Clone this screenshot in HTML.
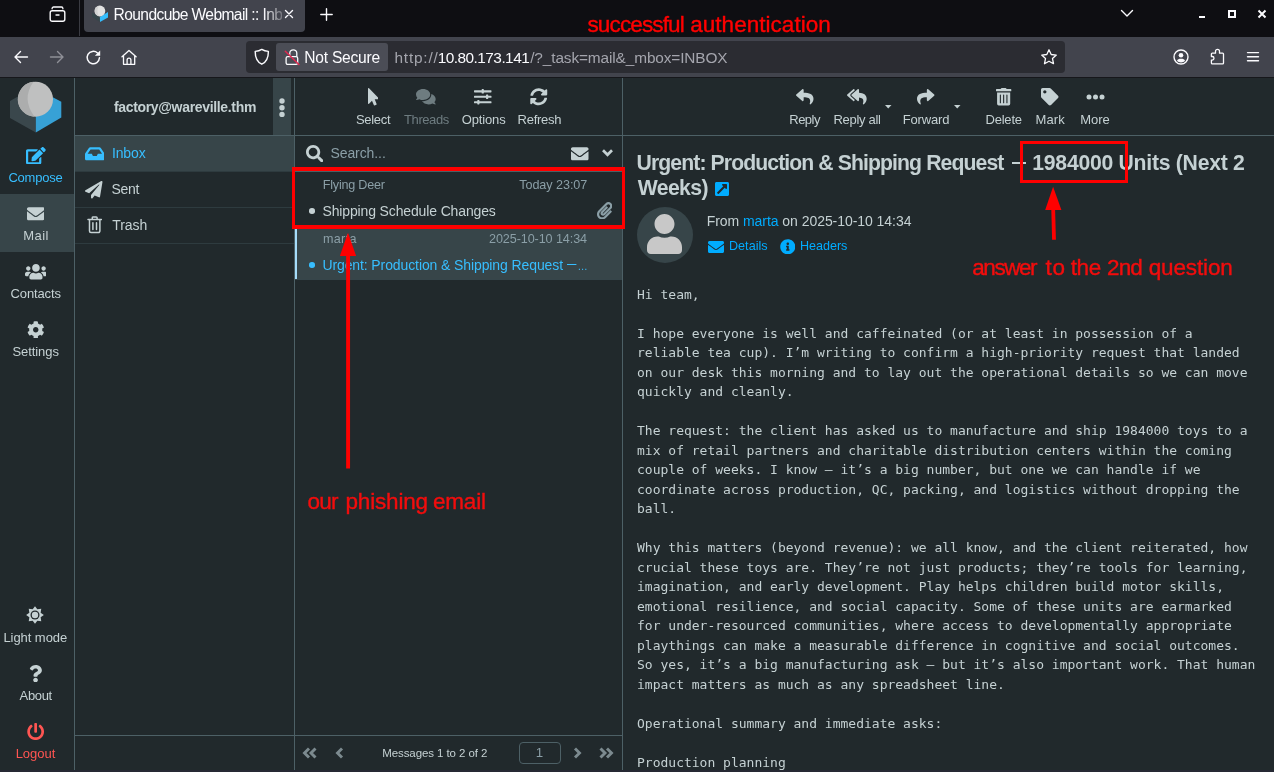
<!DOCTYPE html>
<html lang="en"><head><meta charset="utf-8"><title>Roundcube Webmail :: Inbox</title>
<style>
html,body{margin:0;padding:0;background:#21292c;}
body{width:1274px;height:772px;position:relative;overflow:hidden;font-family:"Liberation Sans", sans-serif;color:#c5d1d3;}
#app{position:absolute;left:0;top:0;width:1274px;height:772px;overflow:hidden;will-change:transform;}
.a{position:absolute;display:block;}
.t{position:absolute;white-space:pre;line-height:1;}
pre{margin:0;}
</style></head>
<body>
<div id="app">
<!-- browser chrome -->
<div class="a" style="left:0px;top:0px;width:1274px;height:37px;background:#0e0e12;"></div>
<div class="a" style="left:0px;top:37px;width:1274px;height:41px;background:#42444d;border-bottom:1px solid #16171b;box-sizing:border-box;"></div>
<svg class="a" style="left:48.6px;top:6px;" width="17" height="18" viewBox="0 0 17 18"><path d="M3.100 2.800v-.3a1.500 1.500 0 0 1 1.500-1.500h7.800a1.500 1.500 0 0 1 1.500 1.500v.3" stroke="#fbfbfe" stroke-width="1.300" fill="none" stroke-linecap="round"/><rect x="1.200" y="4.700" width="14.600" height="10.600" rx="2" fill="none" stroke="#fbfbfe" stroke-width="1.400"/><path d="M7 9h3" stroke="#fbfbfe" stroke-width="1.400" stroke-linecap="round"/></svg>
<div class="a" style="left:79px;top:0px;width:1px;height:36px;background:#3a3b42;"></div>
<div class="a" style="left:84px;top:-4px;width:221px;height:36px;background:#42444d;border-radius:4px;"></div>
<svg class="a" style="left:92px;top:5px;" width="16.4" height="17.2" viewBox="0 0 16.4 17.2"><polygon points="0,7.400 7.900,12 7.900,17 0.200,12" fill="#37464b"/><polygon points="7.900,12 16.200,7 16,12.400 8,17" fill="#35bdfd"/><circle cx="7.900" cy="6" r="5.400" fill="#e2e2e2"/><path d="M7 0.700A5.400 5.400 0 0 0 7.300 11.300Q3.500 6 7 0.700z" fill="#d2d2d2"/></svg>
<span class="t" style="left:113.60px;top:7.12px;font-size:15.6px;color:#fbfbfe;letter-spacing:-0.616px;-webkit-mask-image:linear-gradient(90deg,#000 89%,transparent 104%);mask-image:linear-gradient(90deg,#000 89%,transparent 104%);">Roundcube Webmail :: Inb</span>
<svg class="a" style="left:284px;top:8.7px;" width="10" height="10" viewBox="0 0 10 10"><path d="M1.500 1.500l7 7M8.500 1.500l-7 7" stroke="#fbfbfe" stroke-width="1.400" stroke-linecap="round"/></svg>
<svg class="a" style="left:320.1px;top:7.7px;" width="13" height="13" viewBox="0 0 13 13"><path d="M6.500 0.800v11.400M0.800 6.500h11.400" stroke="#fbfbfe" stroke-width="1.400" stroke-linecap="round"/></svg>
<span class="t" style="left:587.47px;top:14.02px;font-size:22.5px;color:#ff0000;letter-spacing:-0.866px;-webkit-text-stroke:0.4px #ff0000;">successful</span>
<span class="t" style="left:690.20px;top:14.02px;font-size:22.5px;color:#ff0000;letter-spacing:0.041px;-webkit-text-stroke:0.4px #ff0000;">authentication</span>
<svg class="a" style="left:1119px;top:8px;" width="16" height="11" viewBox="0 0 16 11"><path d="M2.500 2.500l5.500 5.500L13.500 2.500" stroke="#fbfbfe" stroke-width="1.400" fill="none" stroke-linecap="round" stroke-linejoin="round"/></svg>
<div class="a" style="left:1199px;top:16px;width:6px;height:2px;background:#fbfbfe;"></div>
<div class="a" style="left:1228px;top:10px;width:8px;height:8px;border:2px solid #fbfbfe;box-sizing:border-box;"></div>
<svg class="a" style="left:1257px;top:9px;" width="10" height="10" viewBox="0 0 10 10"><path d="M1.500 1.500l7 7M8.500 1.500l-7 7" stroke="#fbfbfe" stroke-width="2"/></svg>
<svg class="a" style="left:13px;top:49px;" width="16" height="16" viewBox="0 0 16 16"><path d="M14.500 8h-12M7.500 2.500L2 8l5.500 5.500" stroke="#fbfbfe" stroke-width="1.400" fill="none" stroke-linecap="round" stroke-linejoin="round"/></svg>
<svg class="a" style="left:49px;top:49px;" width="16" height="16" viewBox="0 0 16 16"><path d="M1.500 8h12M8.500 2.500L14 8l-5.500 5.500" stroke="#8f9097" stroke-width="1.400" fill="none" stroke-linecap="round" stroke-linejoin="round"/></svg>
<svg class="a" style="left:84.5px;top:48.5px;" width="17" height="17" viewBox="0 0 16 16"><path d="M13.600 8.300a5.800 5.800 0 1 1-1.800-4.500" stroke="#fbfbfe" stroke-width="1.400" fill="none" stroke-linecap="round"/><path d="M14.300 1.300v5h-5z" fill="#fbfbfe"/></svg>
<svg class="a" style="left:120.5px;top:49px;" width="16" height="16.5" viewBox="0 0 16 16.5"><path d="M1 7.800L8 1.400l7.100 6.400M2.500 6.900v8.400h11.200V6.900M6.100 15.300v-4.200a1.900 1.900 0 0 1 3.800 0v4.200" stroke="#fbfbfe" stroke-width="1.300" fill="none" stroke-linecap="round" stroke-linejoin="round"/></svg>
<div class="a" style="left:246px;top:41px;width:819px;height:32px;background:#2b2c32;border-radius:4px;"></div>
<svg class="a" style="left:253.2px;top:48.1px;" width="17.6" height="17.6" viewBox="0 0 16 16"><path d="M8 1.300c2 1.300 4 1.700 6 1.800c0 5.500-1.500 9.500-6 11.600C3.500 12.600 2 8.600 2 3.100c2-.1 4-.5 6-1.800z" stroke="#fbfbfe" stroke-width="1.300" fill="none" stroke-linejoin="round"/></svg>
<div class="a" style="left:276px;top:43px;width:112px;height:28px;background:#4b4d56;border-radius:3px;"></div>
<svg class="a" style="left:283px;top:48px;" width="18" height="18" viewBox="0 0 18 18"><rect x="3.100" y="8.600" width="11.600" height="7.800" rx="1.600" fill="none" stroke="#fbfbfe" stroke-width="1.300"/><path d="M6.800 8.500V5.300a3.500 3.500 0 0 1 7 0v3.200" fill="none" stroke="#fbfbfe" stroke-width="1.300"/><path d="M2.300 3.300l13.600 13.200" stroke="#e22850" stroke-width="1.500" stroke-linecap="round"/></svg>
<span class="t" style="left:304.28px;top:49.51px;font-size:15.6px;color:#fbfbfe;letter-spacing:-0.231px;">Not Secure</span>
<span class="t" style="left:394.46px;top:49.51px;font-size:15.4px;color:#a4a5ad;letter-spacing:0.804px;">http://</span>
<span class="t" style="left:437.84px;top:49.51px;font-size:15.4px;color:#fbfbfe;letter-spacing:-0.546px;">10.80.173.141</span>
<span class="t" style="left:530.22px;top:49.51px;font-size:15.4px;color:#a4a5ad;letter-spacing:-0.121px;">/?_task=mail&amp;_mbox=INBOX</span>
<svg class="a" style="left:1040px;top:48px;" width="18" height="18" viewBox="0 0 18 18"><path d="M9 1.800l2.200 4.700 5.100.6-3.800 3.500 1 5.100L9 13.200l-4.500 2.500 1-5.100L1.700 7.100l5.100-.6z" stroke="#fbfbfe" stroke-width="1.300" fill="none" stroke-linejoin="round"/></svg>
<svg class="a" style="left:1173px;top:49px;" width="16" height="16" viewBox="0 0 16 16"><circle cx="8" cy="8" r="7" fill="none" stroke="#fbfbfe" stroke-width="1.400"/><circle cx="8" cy="6.300" r="2.300" fill="#fbfbfe"/><path d="M4 11.800c.6-1.500 1.900-2 4-2s3.400.5 4 2c-1 1.200-2.400 1.700-4 1.700s-3-.5-4-1.700z" fill="#fbfbfe"/></svg>
<svg class="a" style="left:1209px;top:48px;" width="17" height="17" viewBox="0 0 17 17"><path d="M3.300 5.200H6.500V3.300a2 2 0 0 1 4 0V5.200H13.600a.9.900 0 0 1 .9.900V14.900a.9.900 0 0 1-.9.900H3.300a.9.900 0 0 1-.9-.9V12.100H3.200a1.800 1.800 0 0 0 0-3.600H2.400V6.100a.9.900 0 0 1 .9-.9z" stroke="#fbfbfe" stroke-width="1.300" fill="none" stroke-linejoin="round"/></svg>
<svg class="a" style="left:1245px;top:49px;" width="16" height="16" viewBox="0 0 16 16"><path d="M2.500 3.600h11M2.500 7.700h11M2.500 11.800h11" stroke="#fbfbfe" stroke-width="1.400" stroke-linecap="round"/></svg>
<!-- task menu -->
<div class="a" style="left:74px;top:78px;width:1px;height:692px;background:#4d6066;"></div>
<div class="a" style="left:294px;top:78px;width:1px;height:692px;background:#4d6066;"></div>
<div class="a" style="left:622px;top:78px;width:1px;height:692px;background:#4d6066;"></div>
<div class="a" style="left:75px;top:135px;width:219px;height:1px;background:#4d6066;"></div>
<div class="a" style="left:295px;top:135px;width:327px;height:1px;background:#4d6066;"></div>
<div class="a" style="left:623px;top:135px;width:651px;height:1px;background:#4d6066;"></div>
<svg class="a" style="left:10px;top:81px;" width="52" height="53" viewBox="0 0 52 53"><polygon points="0,20.100 8.800,15.100 25.800,15.100 25.800,51.600 0,37" fill="#3a474c"/><polygon points="51.300,20.800 42.800,16.200 25.800,16.200 25.800,51.600 51.300,36.600" fill="#37a1d6"/><circle cx="25.500" cy="18.200" r="17.500" fill="#bfc0c0"/><path d="M23.500 0.800A17.500 17.500 0 0 0 24.500 35.700Q11.200 18 23.500 0.800z" fill="#acadad"/></svg>
<div class="a" style="left:0px;top:194px;width:74px;height:58px;background:#374549;"></div>
<svg class="a" style="left:25.96px;top:146.55px;" width="19.69" height="17.50" viewBox="0 0 576 512"><path fill="#37beff" d="M402.600 83.200l90.200 90.200c3.800 3.800 3.800 10 0 13.800L274.400 405.600l-92.800 10.300c-12.400 1.400-22.900-9.100-21.500-21.500l10.300-92.800L388.800 83.200c3.800-3.800 10-3.800 13.800 0zm162-22.900l-48.800-48.800c-15.200-15.200-39.900-15.200-55.200 0l-35.400 35.400c-3.800 3.800-3.800 10 0 13.800l90.200 90.200c3.800 3.800 10 3.800 13.800 0l35.400-35.400c15.200-15.300 15.200-40 0-55.200zM384 346.200V448H64V128h229.800c3.200 0 6.200-1.300 8.500-3.500l40-40c7.600-7.600 2.200-20.500-8.500-20.500H48C21.500 64 0 85.500 0 112v352c0 26.500 21.500 48 48 48h352c26.500 0 48-21.500 48-48V306.200c0-10.700-12.900-16-20.500-8.500l-40 40c-2.200 2.300-3.500 5.300-3.500 8.500z"/></svg>
<span class="t" style="left:8.42px;top:171.00px;font-size:13px;color:#37beff;letter-spacing:-0.223px;">Compose</span>
<svg class="a" style="left:26.75px;top:204.75px;" width="17.50" height="17.50" viewBox="0 0 512 512"><path fill="#c5d1d3" d="M502.3 190.8c3.9-3.1 9.7-.2 9.7 4.700V400c0 26.500-21.500 48-48 48H48c-26.500 0-48-21.500-48-48V195.600c0-5 5.700-7.800 9.700-4.700 22.400 17.400 52.100 39.500 154.100 113.600 21.100 15.400 56.700 47.800 92.200 47.600 35.700.3 72-32.800 92.300-47.600 102-74.100 131.600-96.300 154-113.700zM256 320c23.200.4 56.600-29.200 73.400-41.400 132.700-96.300 142.800-104.700 173.400-128.700 5.800-4.500 9.200-11.500 9.200-18.900v-19c0-26.500-21.500-48-48-48H48C21.500 64 0 85.500 0 112v19c0 7.400 3.400 14.300 9.200 18.900 30.600 23.900 40.700 32.400 173.400 128.700 16.800 12.200 50.200 41.800 73.400 41.400z"/></svg>
<span class="t" style="left:23.18px;top:229.00px;font-size:13px;color:#c5d1d3;letter-spacing:0.450px;">Mail</span>
<svg class="a" style="left:24.56px;top:262.75px;" width="21.88" height="17.50" viewBox="0 0 640 512"><path fill="#c5d1d3" d="M96 224c35.300 0 64-28.700 64-64s-28.700-64-64-64-64 28.700-64 64 28.700 64 64 64zm448 0c35.300 0 64-28.700 64-64s-28.700-64-64-64-64 28.700-64 64 28.700 64 64 64zm32 32h-64c-17.600 0-33.500 7.100-45.100 18.600 40.300 22.100 68.900 62 75.100 109.400h66c17.700 0 32-14.300 32-32v-32c0-35.300-28.700-64-64-64zm-256 0c61.900 0 112-50.100 112-112S381.900 32 320 32 208 82.100 208 144s50.100 112 112 112zm76.800 32h-8.300c-20.800 10-43.900 16-68.500 16s-47.600-6-68.500-16h-8.300C179.600 288 128 339.600 128 403.200V432c0 26.500 21.500 48 48 48h288c26.500 0 48-21.500 48-48v-28.800c0-63.600-51.600-115.200-115.200-115.200zm-223.700-13.400C161.500 263.100 145.600 256 128 256H64c-35.300 0-64 28.700-64 64v32c0 17.700 14.300 32 32 32h65.900c6.300-47.400 34.900-87.300 75.200-109.400z"/></svg>
<span class="t" style="left:10.54px;top:287.00px;font-size:13px;color:#c5d1d3;letter-spacing:-0.134px;">Contacts</span>
<svg class="a" style="left:26.75px;top:320.75px;" width="17.50" height="17.50" viewBox="0 0 512 512"><path fill="#c5d1d3" d="M487.400 315.700l-42.600-24.600c4.300-23.200 4.300-47 0-70.200l42.600-24.600c4.900-2.800 7.100-8.600 5.500-14-11.100-35.600-30-67.800-54.700-94.600-3.800-4.100-10-5.100-14.800-2.300L380.800 110c-17.900-15.400-38.500-27.300-60.800-35.100V25.800c0-5.600-3.900-10.500-9.400-11.700-36.700-8.200-74.300-7.800-109.200 0-5.500 1.200-9.400 6.100-9.400 11.700V75c-22.200 7.900-42.800 19.800-60.800 35.100L88.700 85.500c-4.900-2.800-11-1.900-14.800 2.300-24.700 26.700-43.600 58.900-54.700 94.600-1.700 5.400.6 11.200 5.500 14L67.300 221c-4.300 23.200-4.300 47 0 70.200l-42.600 24.600c-4.900 2.800-7.100 8.600-5.500 14 11.100 35.600 30 67.800 54.700 94.600 3.800 4.100 10 5.100 14.800 2.300l42.600-24.600c17.900 15.400 38.500 27.300 60.800 35.100v49.200c0 5.600 3.900 10.500 9.400 11.700 36.700 8.200 74.300 7.800 109.200 0 5.500-1.200 9.400-6.100 9.400-11.700v-49.200c22.200-7.900 42.800-19.800 60.800-35.100l42.600 24.600c4.900 2.800 11 1.900 14.800-2.300 24.700-26.700 43.600-58.900 54.700-94.600 1.500-5.500-.7-11.300-5.600-14.100zM256 336c-44.100 0-80-35.900-80-80s35.900-80 80-80 80 35.900 80 80-35.900 80-80 80z"/></svg>
<span class="t" style="left:12.44px;top:345.00px;font-size:13px;color:#c5d1d3;letter-spacing:-0.069px;">Settings</span>
<svg class="a" style="left:25.4px;top:605.3px;" width="20" height="20" viewBox="0 0 20 20"><polygon points="10.00,1.15 12.33,4.36 16.26,3.74 15.64,7.67 18.85,10.00 15.64,12.33 16.26,16.26 12.33,15.64 10.00,18.85 7.67,15.64 3.74,16.26 4.36,12.33 1.15,10.00 4.36,7.67 3.74,3.74 7.67,4.36" fill="#c5d1d3"/><circle cx="10" cy="10" r="4.500" fill="#21292c"/><circle cx="10" cy="10" r="3.200" fill="#c5d1d3"/></svg>
<span class="t" style="left:3.40px;top:631.00px;font-size:13px;color:#c5d1d3;letter-spacing:-0.056px;">Light mode</span>
<svg class="a" style="left:29.34px;top:664.95px;" width="13.12" height="17.50" viewBox="0 0 384 512"><path fill="#c5d1d3" d="M202.021 0C122.202 0 70.503 32.703 29.914 91.026c-7.363 10.580-5.093 25.086 5.178 32.874l43.138 32.709c10.373 7.865 25.132 6.026 33.253-4.148 25.049-31.381 43.630-49.449 82.757-49.449 30.764 0 68.816 19.799 68.816 49.631 0 22.552-18.617 34.134-48.993 51.164-35.423 19.860-82.299 44.576-82.299 106.405V320c0 13.255 10.745 24 24 24h72.471c13.255 0 24-10.745 24-24v-5.773c0-42.860 125.268-44.645 125.268-160.627C377.504 66.256 286.902 0 202.021 0zM192 373.459c-38.196 0-69.271 31.075-69.271 69.271 0 38.195 31.075 69.270 69.271 69.270s69.271-31.075 69.271-69.271-31.075-69.270-69.271-69.270z"/></svg>
<span class="t" style="left:19.57px;top:689.00px;font-size:13px;color:#c5d1d3;letter-spacing:-0.329px;">About</span>
<svg class="a" style="left:26.75px;top:722.75px;" width="17.30" height="17.30" viewBox="0 0 512 512"><path fill="#ff5552" d="M400 54.100c63 45 104 118.600 104 201.900 0 136.800-110.800 247.700-247.500 248C120 504.300 8.200 393 8 256.400 7.900 173.100 48.900 99.300 111.800 54.200c11.700-8.300 28-4.800 35 7.700L162.600 90c5.900 10.500 3.100 23.800-6.600 31-41.500 30.800-68 79.600-68 134.900-.1 92.300 74.500 168.100 168 168.100 91.600 0 168.600-74.200 168-169.100-.3-51.800-24.700-101.800-68.100-134-9.700-7.200-12.400-20.500-6.500-30.900l15.800-28.100c7-12.400 23.200-16.100 34.800-7.800zM296 264V24c0-13.300-10.700-24-24-24h-32c-13.300 0-24 10.700-24 24v240c0 13.300 10.700 24 24 24h32c13.300 0 24-10.700 24-24z"/></svg>
<span class="t" style="left:15.64px;top:747.00px;font-size:13px;color:#ff5552;letter-spacing:-0.029px;">Logout</span>
<!-- sidebar -->
<span class="t" style="left:113.95px;top:100.01px;font-size:14px;color:#c5d1d3;font-weight:700;letter-spacing:-0.332px;">factory@wareville.thm</span>
<div class="a" style="left:273px;top:78px;width:18px;height:57px;background:#374549;"></div>
<svg class="a" style="left:277.6px;top:96.5px;" width="8" height="22" viewBox="0 0 8 22"><circle cx="4" cy="4" r="2.700" fill="#c5d1d3"/><circle cx="4" cy="10.700" r="2.700" fill="#c5d1d3"/><circle cx="4" cy="17.400" r="2.700" fill="#c5d1d3"/></svg>
<div class="a" style="left:75px;top:136px;width:219px;height:35px;background:#374549;"></div>
<div class="a" style="left:75px;top:171px;width:219px;height:1px;background:#2e3b3f;"></div>
<div class="a" style="left:75px;top:207px;width:219px;height:1px;background:#2e3b3f;"></div>
<div class="a" style="left:75px;top:243px;width:219px;height:1px;background:#2e3b3f;"></div>
<svg class="a" style="left:84.76px;top:145.25px;" width="19.69" height="17.50" viewBox="0 0 576 512"><path fill="#37beff" d="M567.938 243.908L462.250 85.374A48.003 48.003 0 0 0 422.311 64H153.689a48 48 0 0 0-39.938 21.374L8.062 243.908A47.994 47.994 0 0 0 0 270.533V400c0 26.510 21.490 48 48 48h480c26.510 0 48-21.490 48-48V270.533a47.994 47.994 0 0 0-8.062-26.625zM162.252 128h251.497l85.333 128H376l-32 64H232l-32-64H76.918l85.334-128z"/></svg>
<span class="t" style="left:111.88px;top:145.60px;font-size:14px;color:#37beff;letter-spacing:-0.096px;">Inbox</span>
<svg class="a" style="left:85.45px;top:181.05px;" width="17.50" height="17.50" viewBox="0 0 512 512"><path fill="#c5d1d3" d="M476 3.200L12.500 270.600c-18.100 10.400-15.800 35.600 2.200 43.200L121 358.400l287.300-253.200c5.500-4.900 13.300 2.600 8.600 8.300L176 407v80.500c0 23.600 28.500 32.900 42.500 15.800L282 426l124.600 52.200c14.200 6 30.400-2.900 33-18.200l72-432C515 7.800 493.300-6.800 476 3.200z"/></svg>
<span class="t" style="left:111.48px;top:181.81px;font-size:14px;color:#c5d1d3;letter-spacing:-0.307px;">Sent</span>
<svg class="a" style="left:86.5px;top:216.2px;" width="15.4" height="17.6" viewBox="0 0 15.4 17.6"><path d="M1 3.500h13.400M5.300 3.300V1.700a.8.800 0 0 1 .8-.8h3.200a.8.800 0 0 1 .8.800v1.600M2.500 3.700v11.400a1.500 1.500 0 0 0 1.500 1.500h7.400a1.500 1.500 0 0 0 1.500-1.500V3.700M5.900 6.800v6.600M9.500 6.800v6.600" stroke="#c5d1d3" stroke-width="1.500" fill="none" stroke-linecap="round" stroke-linejoin="round"/></svg>
<span class="t" style="left:112.20px;top:218.01px;font-size:14px;color:#c5d1d3;letter-spacing:-0.015px;">Trash</span>
<div class="a" style="left:75px;top:735px;width:219px;height:1px;background:#4d6066;"></div>
<!-- message list -->
<svg class="a" style="left:367.53px;top:88.45px;" width="10.94" height="17.50" viewBox="0 0 320 512"><path fill="#c5d1d3" d="M302.189 329.126H196.105l55.831 135.993c3.889 9.428-.555 19.999-9.444 23.999l-49.165 21.427c-9.165 4-19.443-.571-23.332-9.714l-53.053-129.136-86.664 89.138C18.729 472.710 0 463.554 0 447.977V18.299C0 1.899 19.921-6.096 30.277 5.443l284.412 292.542c11.472 11.179 3.007 31.141-12.500 31.141z"/></svg>
<span class="t" style="left:356.01px;top:113.00px;font-size:13px;color:#c5d1d3;letter-spacing:-0.308px;">Select</span>
<svg class="a" style="left:416.16px;top:88.45px;" width="19.69" height="17.50" viewBox="0 0 576 512"><path fill="#6e7c80" d="M416 192c0-88.400-93.100-160-208-160S0 103.600 0 192c0 34.300 14.100 65.900 38 92-13.400 30.200-35.500 54.200-35.800 54.500-2.200 2.300-2.800 5.700-1.500 8.700S4.800 352 8 352c36.600 0 66.900-12.300 88.700-25 32.200 15.700 70.300 25 111.300 25 114.900 0 208-71.600 208-160zm122 220c23.900-26 38-57.700 38-92 0-66.900-53.500-124.200-129.300-148.100.9 6.600 1.300 13.300 1.300 20.100 0 105.900-107.700 192-240 192-10.800 0-21.300-.8-31.700-1.900C207.800 439.600 281.800 480 368 480c41 0 79.100-9.200 111.300-25 21.800 12.700 52.100 25 88.700 25 3.200 0 6.100-1.900 7.300-4.800 1.300-2.900.7-6.300-1.500-8.700-.3-.3-22.400-24.200-35.800-54.500z"/></svg>
<span class="t" style="left:404.07px;top:113.00px;font-size:13px;color:#6e7c80;letter-spacing:-0.425px;">Threads</span>
<svg class="a" style="left:474.25px;top:88.45px;" width="17.50" height="17.50" viewBox="0 0 512 512"><path fill="#c5d1d3" d="M496 384H160v-16c0-8.800-7.200-16-16-16h-32c-8.800 0-16 7.200-16 16v16H16c-8.800 0-16 7.200-16 16v32c0 8.800 7.200 16 16 16h80v16c0 8.800 7.200 16 16 16h32c8.800 0 16-7.200 16-16v-16h336c8.800 0 16-7.200 16-16v-32c0-8.800-7.200-16-16-16zm0-160h-80v-16c0-8.800-7.200-16-16-16h-32c-8.800 0-16 7.200-16 16v16H16c-8.800 0-16 7.200-16 16v32c0 8.800 7.200 16 16 16h336v16c0 8.800 7.200 16 16 16h32c8.800 0 16-7.200 16-16v-16h80c8.800 0 16-7.200 16-16v-32c0-8.800-7.200-16-16-16zm0-160H288V48c0-8.800-7.200-16-16-16h-32c-8.800 0-16 7.200-16 16v16H16C7.200 64 0 71.200 0 80v32c0 8.800 7.200 16 16 16h208v16c0 8.800 7.200 16 16 16h32c8.800 0 16-7.200 16-16v-16h208c8.800 0 16-7.200 16-16V80c0-8.800-7.200-16-16-16z"/></svg>
<span class="t" style="left:461.70px;top:113.00px;font-size:13px;color:#c5d1d3;letter-spacing:-0.140px;">Options</span>
<svg class="a" style="left:530.25px;top:88.45px;" width="17.50" height="17.50" viewBox="0 0 512 512"><path fill="#c5d1d3" d="M370.720 133.280C339.458 104.008 298.888 87.962 255.848 88c-77.458.068-144.328 53.178-162.791 126.850-1.344 5.363-6.122 9.150-11.651 9.150H24.103c-7.498 0-13.194-6.807-11.807-14.176C33.933 94.924 134.813 8 256 8c66.448 0 126.791 26.136 171.315 68.685L463.030 40.970C478.149 25.851 504 36.559 504 57.941V192c0 13.255-10.745 24-24 24H345.941c-21.382 0-32.090-25.851-16.971-40.971l41.750-41.749zM32 296h134.059c21.382 0 32.090 25.851 16.971 40.971l-41.750 41.750c31.262 29.273 71.835 45.319 114.876 45.280 77.418-.070 144.315-53.144 162.787-126.849 1.344-5.363 6.122-9.150 11.651-9.150h57.304c7.498 0 13.194 6.807 11.807 14.176C478.067 417.076 377.187 504 256 504c-66.448 0-126.791-26.136-171.315-68.685L48.970 471.030C33.851 486.149 8 475.441 8 454.059V320c0-13.255 10.745-24 24-24z"/></svg>
<span class="t" style="left:517.58px;top:113.00px;font-size:13px;color:#c5d1d3;letter-spacing:-0.283px;">Refresh</span>
<svg class="a" style="left:305.75px;top:144.75px;" width="17.50" height="17.50" viewBox="0 0 512 512"><path fill="#c5d1d3" d="M505 442.700L405.300 343c-4.500-4.500-10.600-7-17-7H372c27.600-35.300 44-79.700 44-128C416 93.100 322.900 0 208 0S0 93.100 0 208s93.100 208 208 208c48.300 0 92.700-16.400 128-44v16.300c0 6.400 2.500 12.500 7 17l99.700 99.700c9.400 9.400 24.600 9.400 33.900 0l28.300-28.300c9.400-9.400 9.400-24.600.1-34zM208 336c-70.700 0-128-57.200-128-128 0-70.700 57.200-128 128-128 70.700 0 128 57.200 128 128 0 70.700-57.200 128-128 128z"/></svg>
<span class="t" style="left:330.41px;top:146.01px;font-size:14px;color:#8b9fa7;letter-spacing:-0.076px;">Search...</span>
<svg class="a" style="left:571.25px;top:144.75px;" width="17.50" height="17.50" viewBox="0 0 512 512"><path fill="#c5d1d3" d="M502.3 190.8c3.9-3.1 9.7-.2 9.7 4.700V400c0 26.500-21.500 48-48 48H48c-26.500 0-48-21.500-48-48V195.600c0-5 5.700-7.800 9.700-4.700 22.400 17.400 52.100 39.500 154.100 113.600 21.100 15.400 56.700 47.800 92.200 47.600 35.700.3 72-32.800 92.300-47.600 102-74.100 131.600-96.300 154-113.700zM256 320c23.200.4 56.600-29.200 73.400-41.400 132.700-96.300 142.800-104.700 173.400-128.700 5.800-4.500 9.200-11.500 9.200-18.900v-19c0-26.500-21.500-48-48-48H48C21.500 64 0 85.500 0 112v19c0 7.400 3.400 14.300 9.200 18.900 30.600 23.900 40.700 32.400 173.400 128.700 16.800 12.200 50.200 41.800 73.400 41.400z"/></svg>
<svg class="a" style="left:601.3px;top:148.3px;" width="13" height="10" viewBox="0 0 13 10"><path d="M2 2.300l4.500 4.500L11 2.300" stroke="#c5d1d3" stroke-width="2.700" fill="none" stroke-linecap="butt" stroke-linejoin="miter"/></svg>
<div class="a" style="left:295px;top:171px;width:327px;height:1px;background:#4d6066;"></div>
<div class="a" style="left:295px;top:225px;width:327px;height:1px;background:#36454a;"></div>
<span class="t" style="left:322.77px;top:179.01px;font-size:12.6px;color:#8b9fa7;letter-spacing:-0.218px;">Flying Deer</span>
<span class="t" style="left:519.20px;top:179.01px;font-size:12.6px;color:#8b9fa7;letter-spacing:-0.049px;">Today 23:07</span>
<div class="a" style="left:309.1px;top:208.1px;width:5.6px;height:5.6px;background:#c5d1d3;border-radius:50%;"></div>
<span class="t" style="left:322.46px;top:203.90px;font-size:14px;color:#c5d1d3;letter-spacing:-0.137px;">Shipping Schedule Changes</span>
<svg class="a" style="left:596.94px;top:201.65px;" width="15.31" height="17.50" viewBox="0 0 448 512"><path fill="#8b9fa7" d="M43.246 466.142c-58.430-60.289-57.341-157.511 1.386-217.581L254.392 34c44.316-45.332 116.351-45.336 160.671 0 43.890 44.894 43.943 117.329 0 162.276L232.214 383.128c-29.855 30.537-78.633 30.111-107.982-.998-28.275-29.970-27.368-77.473 1.452-106.953l143.743-146.835c6.182-6.314 16.312-6.422 22.626-.241l22.861 22.379c6.315 6.182 6.422 16.312.241 22.626L171.427 319.927c-4.932 5.045-5.236 13.428-.648 18.292 4.372 4.634 11.245 4.711 15.688.165l182.849-186.851c19.613-20.062 19.613-52.725-.011-72.798-19.189-19.627-49.957-19.637-69.154 0L90.390 293.295c-34.763 35.560-35.299 93.120-1.191 128.313 34.010 35.093 88.985 35.137 123.058.286l172.060-175.999c6.177-6.319 16.307-6.433 22.626-.256l22.877 22.364c6.319 6.177 6.434 16.307.256 22.626l-172.060 175.998c-59.576 60.938-155.943 60.216-214.770-.485z"/></svg>
<div class="a" style="left:295px;top:226px;width:327px;height:53px;background:#374549;"></div>
<div class="a" style="left:295px;top:226px;width:2px;height:53px;background:#a5dcfa;"></div>
<span class="t" style="left:322.98px;top:233.01px;font-size:12.6px;color:#8b9fa7;letter-spacing:0.330px;">marta</span>
<span class="t" style="left:489.01px;top:233.01px;font-size:12.6px;color:#8b9fa7;letter-spacing:-0.091px;">2025-10-10 14:34</span>
<div class="a" style="left:309.1px;top:262.1px;width:5.6px;height:5.6px;background:#37beff;border-radius:50%;"></div>
<span class="t" style="left:322.40px;top:257.71px;font-size:14px;color:#37beff;letter-spacing:-0.103px;">Urgent: Production &amp; Shipping Request</span>
<span class="t" style="left:567.10px;top:256.21px;font-size:14px;color:#37beff;transform:scaleX(.67);transform-origin:0 50%;">—</span>
<span class="t" style="left:577.60px;top:261.70px;font-size:10.2px;color:#37beff;">…</span>
<div class="a" style="left:295px;top:279px;width:327px;height:1px;background:#36454a;"></div>
<div class="a" style="left:295px;top:735px;width:327px;height:1px;background:#4d6066;"></div>
<svg class="a" style="left:302px;top:747.2px;" width="16" height="12" viewBox="0 0 16 12"><path d="M7 1.500L2.500 6 7 10.500M13.500 1.500L9 6l4.500 4.500" stroke="#7c8a8f" stroke-width="2.900" fill="none" stroke-linecap="butt" stroke-linejoin="miter"/></svg>
<svg class="a" style="left:331.5px;top:747.2px;" width="16" height="12" viewBox="0 0 16 12"><path d="M10 1.500L5.500 6 10 10.500" stroke="#7c8a8f" stroke-width="2.900" fill="none" stroke-linecap="butt" stroke-linejoin="miter"/></svg>
<svg class="a" style="left:568.9px;top:747.2px;" width="16" height="12" viewBox="0 0 16 12"><path d="M6 1.500L10.500 6 6 10.500" stroke="#7c8a8f" stroke-width="2.900" fill="none" stroke-linecap="butt" stroke-linejoin="miter"/></svg>
<svg class="a" style="left:597.8px;top:747.2px;" width="16" height="12" viewBox="0 0 16 12"><path d="M2.500 1.500L7 6 2.500 10.500M9 1.500L13.500 6 9 10.500" stroke="#7c8a8f" stroke-width="2.900" fill="none" stroke-linecap="butt" stroke-linejoin="miter"/></svg>
<span class="t" style="left:382.16px;top:748.00px;font-size:11.5px;color:#c5d1d3;letter-spacing:-0.080px;">Messages 1 to 2 of 2</span>
<div class="a" style="left:519px;top:742px;width:42px;height:22px;border:1px solid #4d6066;border-radius:4px;box-sizing:border-box;"></div>
<span class="t" style="left:535.80px;top:746.42px;font-size:13.3px;color:#8b9fa7;">1</span>
<!-- content -->
<svg class="a" style="left:796.25px;top:88.45px;" width="17.50" height="17.50" viewBox="0 0 512 512"><path fill="#c5d1d3" d="M8.309 189.836L184.313 37.851C199.719 24.546 224 35.347 224 56.015v80.053c160.629 1.839 288 34.032 288 186.258 0 61.441-39.581 122.309-83.333 154.132-13.653 9.931-33.111-2.533-28.077-18.631 45.344-145.012-21.507-183.510-176.590-185.742V360c0 20.700-24.300 31.453-39.687 18.164l-176.004-152c-11.071-9.562-11.086-26.753 0-36.328z"/></svg>
<span class="t" style="left:789.32px;top:113.00px;font-size:13px;color:#c5d1d3;letter-spacing:-0.532px;">Reply</span>
<svg class="a" style="left:847.16px;top:88.45px;" width="19.69" height="17.50" viewBox="0 0 576 512"><path fill="#c5d1d3" d="M136.309 189.836L312.313 37.851C327.720 24.546 352 35.348 352 56.015v82.763c129.182 10.231 224 52.212 224 183.548 0 61.441-39.582 122.309-83.333 154.132-13.653 9.931-33.111-2.533-28.077-18.631 38.512-123.162-3.922-169.482-112.590-182.015v84.175c0 20.701-24.300 31.453-39.687 18.164L136.309 226.164c-11.071-9.561-11.086-26.753 0-36.328zm-128 36.328L184.313 378.150C199.700 391.439 224 380.687 224 359.986v-15.818l-108.606-93.785A55.960 55.960 0 0 1 96 207.998a55.953 55.953 0 0 1 19.393-42.380L224 71.832V56.015c0-20.667-24.280-31.469-39.687-18.164L8.309 189.836c-11.086 9.575-11.071 26.767 0 36.328z"/></svg>
<span class="t" style="left:833.48px;top:113.00px;font-size:13px;color:#c5d1d3;letter-spacing:-0.301px;">Reply all</span>
<svg class="a" style="left:885.2px;top:105.2px;" width="6.5" height="3.6" viewBox="0 0 6.5 3.6"><path d="M0 0h6.500L3.250 3.600z" fill="#c5d1d3"/></svg>
<svg class="a" style="left:917.25px;top:88.45px;" width="17.50" height="17.50" viewBox="0 0 512 512"><path fill="#c5d1d3" d="M503.691 189.836L327.687 37.851C312.281 24.546 288 35.347 288 56.015v80.053C127.371 137.907 0 170.100 0 322.326c0 61.441 39.581 122.309 83.333 154.132 13.653 9.931 33.111-2.533 28.077-18.631C66.066 312.814 132.917 274.316 288 272.085V360c0 20.700 24.300 31.453 39.687 18.164l176.004-152c11.071-9.562 11.086-26.753 0-36.328z"/></svg>
<span class="t" style="left:902.77px;top:113.00px;font-size:13px;color:#c5d1d3;letter-spacing:-0.167px;">Forward</span>
<svg class="a" style="left:954.1px;top:105.2px;" width="6.5" height="3.6" viewBox="0 0 6.5 3.6"><path d="M0 0h6.500L3.250 3.600z" fill="#c5d1d3"/></svg>
<svg class="a" style="left:996.34px;top:88.45px;" width="15.31" height="17.50" viewBox="0 0 448 512"><path fill="#c5d1d3" d="M32 464a48 48 0 0 0 48 48h288a48 48 0 0 0 48-48V128H32zm272-256a16 16 0 0 1 32 0v224a16 16 0 0 1-32 0zm-96 0a16 16 0 0 1 32 0v224a16 16 0 0 1-32 0zm-96 0a16 16 0 0 1 32 0v224a16 16 0 0 1-32 0zM432 32H312l-9.400-18.700A24 24 0 0 0 281.100 0H166.800a23.720 23.720 0 0 0-21.400 13.300L136 32H16A16 16 0 0 0 0 48v32a16 16 0 0 0 16 16h416a16 16 0 0 0 16-16V48a16 16 0 0 0-16-16z"/></svg>
<span class="t" style="left:985.48px;top:113.00px;font-size:13px;color:#c5d1d3;letter-spacing:-0.207px;">Delete</span>
<svg class="a" style="left:1041.25px;top:88.45px;" width="17.50" height="17.50" viewBox="0 0 512 512"><path fill="#c5d1d3" d="M0 252.118V48C0 21.490 21.490 0 48 0h204.118a48 48 0 0 1 33.941 14.059l211.882 211.882c18.745 18.745 18.745 49.137 0 67.882L293.823 497.941c-18.745 18.745-49.137 18.745-67.882 0L14.059 286.059A48 48 0 0 1 0 252.118zM112 64c-26.510 0-48 21.490-48 48s21.490 48 48 48 48-21.490 48-48-21.490-48-48-48z"/></svg>
<span class="t" style="left:1035.44px;top:113.00px;font-size:13px;color:#c5d1d3;letter-spacing:0.136px;">Mark</span>
<svg class="a" style="left:1085.5px;top:94.2px;" width="19" height="6" viewBox="0 0 19 6"><circle cx="3" cy="3" r="2.500" fill="#c5d1d3"/><circle cx="9.500" cy="3" r="2.500" fill="#c5d1d3"/><circle cx="16" cy="3" r="2.500" fill="#c5d1d3"/></svg>
<span class="t" style="left:1080.34px;top:113.00px;font-size:13px;color:#c5d1d3;letter-spacing:-0.078px;">More</span>
<span class="t" style="left:636.58px;top:152.42px;font-size:21.2px;color:#c5d1d3;font-weight:700;letter-spacing:-0.901px;">Urgent: Production &amp; Shipping Request</span>
<span class="t" style="left:1011.60px;top:151.20px;font-size:20px;color:#c5d1d3;font-weight:700;transform:scaleX(.7);transform-origin:0 50%;">—</span>
<span class="t" style="left:1032.33px;top:152.42px;font-size:21.2px;color:#c5d1d3;font-weight:700;letter-spacing:-0.267px;">1984000 Units (Next 2</span>
<span class="t" style="left:637.80px;top:177.31px;font-size:21.2px;color:#c5d1d3;font-weight:700;letter-spacing:-0.630px;">Weeks)</span>
<svg class="a" style="left:715.00px;top:181.00px;" width="14.00" height="16.00" viewBox="0 0 448 512"><path fill="#00acff" d="M448 80v352c0 26.510-21.490 48-48 48H48c-26.510 0-48-21.490-48-48V80c0-26.510 21.490-48 48-48h352c26.510 0 48 21.490 48 48zm-88 16H248.029c-21.313 0-32.080 25.861-16.971 40.971l31.984 31.987L67.515 364.485c-4.686 4.686-4.686 12.284 0 16.971l31.029 31.029c4.687 4.686 12.285 4.686 16.971 0l195.526-195.526 31.988 31.991C358.058 263.977 384 253.425 384 231.979V120c0-13.255-10.745-24-24-24z"/></svg>
<div class="a" style="left:637px;top:207px;width:56px;height:56px;background:#374549;border-radius:50%;"></div>
<svg class="a" style="left:647.10px;top:214.30px;" width="35.00" height="40.00" viewBox="0 0 448 512"><path fill="#c8c8c8" d="M224 256c70.700 0 128-57.300 128-128S294.700 0 224 0 96 57.300 96 128s57.300 128 128 128zm89.600 32h-16.700c-22.200 10.200-46.900 16-72.900 16s-50.600-5.800-72.900-16h-16.700C60.200 288 0 348.200 0 422.400V464c0 26.500 21.500 48 48 48h352c26.500 0 48-21.500 48-48v-41.600c0-74.200-60.200-134.400-134.400-134.400z"/></svg>
<span class="t" style="left:706.66px;top:214.01px;font-size:14px;color:#c5d1d3;letter-spacing:-0.050px;">From <span style="color:#00acff">marta</span> on 2025-10-10 14:34</span>
<svg class="a" style="left:708.30px;top:239.00px;" width="16.00" height="16.00" viewBox="0 0 512 512"><path fill="#00acff" d="M502.3 190.8c3.9-3.1 9.7-.2 9.7 4.700V400c0 26.500-21.500 48-48 48H48c-26.500 0-48-21.500-48-48V195.600c0-5 5.700-7.800 9.700-4.700 22.400 17.400 52.100 39.500 154.100 113.600 21.100 15.400 56.700 47.800 92.200 47.600 35.700.3 72-32.800 92.300-47.600 102-74.100 131.600-96.300 154-113.700zM256 320c23.200.4 56.600-29.200 73.400-41.400 132.700-96.300 142.800-104.700 173.400-128.700 5.800-4.500 9.200-11.500 9.200-18.900v-19c0-26.500-21.500-48-48-48H48C21.500 64 0 85.500 0 112v19c0 7.400 3.400 14.300 9.200 18.900 30.600 23.900 40.700 32.400 173.400 128.700 16.800 12.200 50.200 41.800 73.400 41.400z"/></svg>
<span class="t" style="left:728.95px;top:240.31px;font-size:12.6px;color:#00acff;letter-spacing:0.033px;">Details</span>
<svg class="a" style="left:779.80px;top:238.70px;" width="15.60" height="15.60" viewBox="0 0 512 512"><path fill="#00acff" d="M256 8C119.043 8 8 119.083 8 256c0 136.997 111.043 248 248 248s248-111.003 248-248C504 119.083 392.957 8 256 8zm0 110c23.196 0 42 18.804 42 42s-18.804 42-42 42-42-18.804-42-42 18.804-42 42-42zm56 254c0 6.627-5.373 12-12 12h-88c-6.627 0-12-5.373-12-12v-24c0-6.627 5.373-12 12-12h12v-64h-12c-6.627 0-12-5.373-12-12v-24c0-6.627 5.373-12 12-12h64c6.627 0 12 5.373 12 12v100h12c6.627 0 12 5.373 12 12v24z"/></svg>
<span class="t" style="left:800.01px;top:240.31px;font-size:12.6px;color:#00acff;letter-spacing:-0.030px;">Headers</span>
<pre class="a" style="left:637px;top:284.95px;font-family:'DejaVu Sans Mono', 'Liberation Mono', monospace;font-size:13px;line-height:19.5px;color:#c5d1d3;">Hi team,

I hope everyone is well and caffeinated (or at least in possession of a
reliable tea cup). I’m writing to confirm a high-priority request that landed
on our desk this morning and to lay out the operational details so we can move
quickly and cleanly.

The request: the client has asked us to manufacture and ship 1984000 toys to a
mix of retail partners and charitable distribution centers within the coming
couple of weeks. I know — it’s a big number, but one we can handle if we
coordinate across production, QC, packing, and logistics without dropping the
ball.

Why this matters (beyond revenue): we all know, and the client reiterated, how
crucial these toys are. They’re not just products; they’re tools for learning,
imagination, and early development. Play helps children build motor skills,
emotional resilience, and social capacity. Some of these units are earmarked
for under-resourced communities, where access to developmentally appropriate
playthings can make a measurable difference in cognitive and social outcomes.
So yes, it’s a big manufacturing ask — but it’s also important work. That human
impact matters as much as any spreadsheet line.

Operational summary and immediate asks:

Production planning</pre>
<!-- annotations -->
<div class="a" style="left:292px;top:167px;width:333px;height:62px;border:4px solid #ff0000;box-sizing:border-box;border-width:4px 3.500px 4px 3.500px;"></div>
<svg class="a" style="left:335px;top:230px;" width="28" height="240" viewBox="0 0 28 240"><path d="M13.100 24v214.500" stroke="#ff0000" stroke-width="3.900"/><path d="M13 2.800l8.150 23.100h-16.300z" fill="#ff0000"/></svg>
<span class="t" style="left:307.45px;top:490.71px;font-size:22.5px;color:#f20d0d;letter-spacing:-0.784px;-webkit-text-stroke:0.4px #f20d0d;">our</span>
<span class="t" style="left:345.53px;top:490.71px;font-size:22.5px;color:#f20d0d;letter-spacing:-0.174px;-webkit-text-stroke:0.4px #f20d0d;">phishing</span>
<span class="t" style="left:432.98px;top:490.71px;font-size:22.5px;color:#f20d0d;letter-spacing:-0.202px;-webkit-text-stroke:0.4px #f20d0d;">email</span>
<div class="a" style="left:1019.5px;top:140.5px;width:108px;height:42.5px;border:3px solid #ff0000;box-sizing:border-box;"></div>
<svg class="a" style="left:1040px;top:185px;" width="28" height="58" viewBox="0 0 28 58"><path d="M13.200 24l.8 30.800" stroke="#ff0000" stroke-width="3.800"/><path d="M13.100 1.700l8.300 23.300h-16.200z" fill="#ff0000"/></svg>
<span class="t" style="left:972.29px;top:257.30px;font-size:22.5px;color:#f20d0d;letter-spacing:-1.455px;-webkit-text-stroke:0.4px #f20d0d;">answer</span>
<span class="t" style="left:1045.38px;top:257.30px;font-size:22.5px;color:#f20d0d;letter-spacing:0.858px;-webkit-text-stroke:0.4px #f20d0d;">to</span>
<span class="t" style="left:1070.69px;top:257.30px;font-size:22.5px;color:#f20d0d;letter-spacing:-0.382px;-webkit-text-stroke:0.4px #f20d0d;">the</span>
<span class="t" style="left:1106.92px;top:257.30px;font-size:22.5px;color:#f20d0d;letter-spacing:-0.788px;-webkit-text-stroke:0.4px #f20d0d;">2nd</span>
<span class="t" style="left:1148.66px;top:257.30px;font-size:22.5px;color:#f20d0d;letter-spacing:-0.131px;-webkit-text-stroke:0.4px #f20d0d;">question</span>
<div class="a" style="left:0px;top:770px;width:1274px;height:2px;background:#262934;"></div>
</div>
</body></html>
